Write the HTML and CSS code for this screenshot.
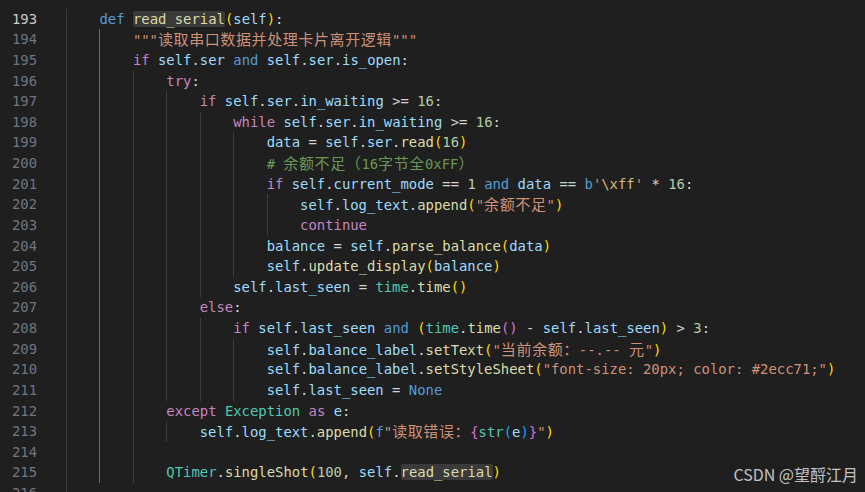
FILE: index.html
```html
<!DOCTYPE html>
<html lang="zh">
<head>
<meta charset="utf-8">
<link rel="stylesheet" href="styles.css">
</head>
<body>
<div class="editor">
  <div class="ln active"><span class="num">193</span><span class="code"><span class="g"></span><span class="b">def</span> <span class="f hl">read_serial</span><span class="p1">(</span><span class="v">self</span><span class="p1">)</span>:</span></div>
  <div class="ln"><span class="num">194</span><span class="code"><span class="g"></span><span class="g a"></span><span class="s">"""<span class="cn">读取串口数据并处理卡片离开逻辑</span>"""</span></span></div>
  <div class="ln"><span class="num">195</span><span class="code"><span class="g"></span><span class="g a"></span><span class="k">if</span> <span class="v">self</span>.<span class="v">ser</span> <span class="b">and</span> <span class="v">self</span>.<span class="v">ser</span>.<span class="v">is_open</span>:</span></div>
  <div class="ln"><span class="num">196</span><span class="code"><span class="g"></span><span class="g a"></span><span class="g"></span><span class="k">try</span>:</span></div>
  <div class="ln"><span class="num">197</span><span class="code"><span class="g"></span><span class="g a"></span><span class="g"></span><span class="g"></span><span class="k">if</span> <span class="v">self</span>.<span class="v">ser</span>.<span class="v">in_waiting</span> &gt;= <span class="n">16</span>:</span></div>
  <div class="ln"><span class="num">198</span><span class="code"><span class="g"></span><span class="g a"></span><span class="g"></span><span class="g"></span><span class="g"></span><span class="k">while</span> <span class="v">self</span>.<span class="v">ser</span>.<span class="v">in_waiting</span> &gt;= <span class="n">16</span>:</span></div>
  <div class="ln"><span class="num">199</span><span class="code"><span class="g"></span><span class="g a"></span><span class="g"></span><span class="g"></span><span class="g"></span><span class="g"></span><span class="v">data</span> = <span class="v">self</span>.<span class="v">ser</span>.<span class="f">read</span><span class="p1">(</span><span class="n">16</span><span class="p1">)</span></span></div>
  <div class="ln"><span class="num">200</span><span class="code"><span class="g"></span><span class="g a"></span><span class="g"></span><span class="g"></span><span class="g"></span><span class="g"></span><span class="c"># <span class="cn">余额不足（</span>16<span class="cn">字节全</span>0xFF<span class="cn">）</span></span></span></div>
  <div class="ln"><span class="num">201</span><span class="code"><span class="g"></span><span class="g a"></span><span class="g"></span><span class="g"></span><span class="g"></span><span class="g"></span><span class="k">if</span> <span class="v">self</span>.<span class="v">current_mode</span> == <span class="n">1</span> <span class="b">and</span> <span class="v">data</span> == <span class="b">b</span><span class="s">'<span class="e">\xff</span>'</span> * <span class="n">16</span>:</span></div>
  <div class="ln"><span class="num">202</span><span class="code"><span class="g"></span><span class="g a"></span><span class="g"></span><span class="g"></span><span class="g"></span><span class="g"></span><span class="g"></span><span class="v">self</span>.<span class="v">log_text</span>.<span class="f">append</span><span class="p1">(</span><span class="s">"<span class="cn">余额不足</span>"</span><span class="p1">)</span></span></div>
  <div class="ln"><span class="num">203</span><span class="code"><span class="g"></span><span class="g a"></span><span class="g"></span><span class="g"></span><span class="g"></span><span class="g"></span><span class="g"></span><span class="k">continue</span></span></div>
  <div class="ln"><span class="num">204</span><span class="code"><span class="g"></span><span class="g a"></span><span class="g"></span><span class="g"></span><span class="g"></span><span class="g"></span><span class="v">balance</span> = <span class="v">self</span>.<span class="f">parse_balance</span><span class="p1">(</span><span class="v">data</span><span class="p1">)</span></span></div>
  <div class="ln"><span class="num">205</span><span class="code"><span class="g"></span><span class="g a"></span><span class="g"></span><span class="g"></span><span class="g"></span><span class="g"></span><span class="v">self</span>.<span class="f">update_display</span><span class="p1">(</span><span class="v">balance</span><span class="p1">)</span></span></div>
  <div class="ln"><span class="num">206</span><span class="code"><span class="g"></span><span class="g a"></span><span class="g"></span><span class="g"></span><span class="g"></span><span class="v">self</span>.<span class="v">last_seen</span> = <span class="t">time</span>.<span class="f">time</span><span class="p1">()</span></span></div>
  <div class="ln"><span class="num">207</span><span class="code"><span class="g"></span><span class="g a"></span><span class="g"></span><span class="g"></span><span class="k">else</span>:</span></div>
  <div class="ln"><span class="num">208</span><span class="code"><span class="g"></span><span class="g a"></span><span class="g"></span><span class="g"></span><span class="g"></span><span class="k">if</span> <span class="v">self</span>.<span class="v">last_seen</span> <span class="b">and</span> <span class="p1">(</span><span class="t">time</span>.<span class="f">time</span><span class="p2">()</span> - <span class="v">self</span>.<span class="v">last_seen</span><span class="p1">)</span> &gt; <span class="n">3</span>:</span></div>
  <div class="ln"><span class="num">209</span><span class="code"><span class="g"></span><span class="g a"></span><span class="g"></span><span class="g"></span><span class="g"></span><span class="g"></span><span class="v">self</span>.<span class="v">balance_label</span>.<span class="f">setText</span><span class="p1">(</span><span class="s">"<span class="cn">当前余额：</span>--.-- <span class="cn">元</span>"</span><span class="p1">)</span></span></div>
  <div class="ln"><span class="num">210</span><span class="code"><span class="g"></span><span class="g a"></span><span class="g"></span><span class="g"></span><span class="g"></span><span class="g"></span><span class="v">self</span>.<span class="v">balance_label</span>.<span class="f">setStyleSheet</span><span class="p1">(</span><span class="s">"font-size: 20px; color: #2ecc71;"</span><span class="p1">)</span></span></div>
  <div class="ln"><span class="num">211</span><span class="code"><span class="g"></span><span class="g a"></span><span class="g"></span><span class="g"></span><span class="g"></span><span class="g"></span><span class="v">self</span>.<span class="v">last_seen</span> = <span class="b">None</span></span></div>
  <div class="ln"><span class="num">212</span><span class="code"><span class="g"></span><span class="g a"></span><span class="g"></span><span class="k">except</span> <span class="t">Exception</span> <span class="k">as</span> <span class="v">e</span>:</span></div>
  <div class="ln"><span class="num">213</span><span class="code"><span class="g"></span><span class="g a"></span><span class="g"></span><span class="g"></span><span class="v">self</span>.<span class="v">log_text</span>.<span class="f">append</span><span class="p1">(</span><span class="b">f</span><span class="s">"<span class="cn">读取错误：</span></span><span class="p2">{</span><span class="t">str</span><span class="p3">(</span><span class="v">e</span><span class="p3">)</span><span class="p2">}</span><span class="s">"</span><span class="p1">)</span></span></div>
  <div class="ln"><span class="num">214</span><span class="code"><span class="g"></span><span class="g a"></span><span class="g"></span></span></div>
  <div class="ln"><span class="num">215</span><span class="code"><span class="g"></span><span class="g a"></span><span class="g"></span><span class="t">QTimer</span>.<span class="f">singleShot</span><span class="p1">(</span><span class="n">100</span>, <span class="v">self</span>.<span class="f hl">read_serial</span><span class="p1">)</span></span></div>
  <div class="ln"><span class="num">216</span><span class="code"><span class="g"></span></span></div>
</div>
<div class="mark">CSDN @望酹江月</div>
</body>
</html>
```
FILE: styles.css
```css
html, body {
  margin: 0;
  padding: 0;
  background: #1f1f1f;
  overflow: hidden;
  width: 865px;
  height: 492px;
}

.editor {
  padding-top: 8.7px;
  font-family: "DejaVu Sans Mono", "Liberation Mono", monospace;
  font-size: 13.9px;
  color: #d4d4d4;
}

.ln {
  display: flex;
  height: 20.64px;
  line-height: 20.64px;
  white-space: pre;
}

.num {
  flex: none;
  width: 37px;
  text-align: right;
  color: #6e7681;
}

.ln.active .num {
  color: #cccccc;
}

.code {
  margin-left: 29px;
  display: block;
}

.g {
  display: inline-block;
  width: 4ch;
  height: 20.64px;
  vertical-align: top;
  box-shadow: inset 1px 0 0 #3d3d3d;
}

.g.a {
  box-shadow: inset 1px 0 0 #6b6b6b;
}

.cn {
  font-family: "Noto Sans CJK SC", sans-serif;
  font-size: 15px;
  letter-spacing: 0.6px;
}

.k { color: #c586c0; }
.b { color: #569cd6; }
.v { color: #9cdcfe; }
.f { color: #dcdcaa; }
.s { color: #ce9178; }
.n { color: #b5cea8; }
.c { color: #6a9955; }
.t { color: #4ec9b0; }
.e { color: #d7ba7d; }
.p1 { color: #ffd700; }
.p2 { color: #da70d6; }
.p3 { color: #179fff; }

.hl {
  background: #3a3a3a;
  border-radius: 2px;
}

.mark {
  position: absolute;
  right: 7px;
  top: 463px;
  font-family: "Noto Sans CJK SC", sans-serif;
  font-size: 16px;
  line-height: 22px;
  color: rgba(225, 225, 225, 0.85);
}
```
